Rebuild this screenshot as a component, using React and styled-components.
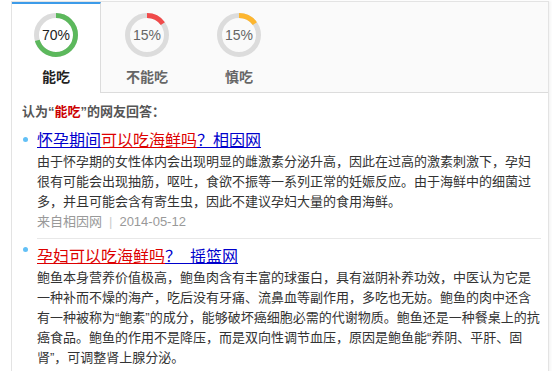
import React from 'react';
import styled, { createGlobalStyle } from 'styled-components';

const GlobalStyle = createGlobalStyle`
  html, body {
    margin: 0;
    padding: 0;
    background: #fff;
  }

  body {
    font-family: "Liberation Sans", "Noto Sans CJK SC", sans-serif;
    color: #333;
  }
`;

const tabs = [
  { label: '能吃', percent: 70, color: '#5cb85c', active: true },
  { label: '不能吃', percent: 15, color: '#f04a4a', active: false },
  { label: '慎吃', percent: 15, color: '#fdb62f', active: false },
];

const answers = [
  {
    title: [
      { text: '怀孕期间', hot: false },
      { text: '可以吃海鲜吗', hot: true },
      { text: '？相因网', hot: false },
    ],
    body: '由于怀孕期的女性体内会出现明显的雌激素分泌升高，因此在过高的激素刺激下，孕妇很有可能会出现抽筋，呕吐，食欲不振等一系列正常的妊娠反应。由于海鲜中的细菌过多，并且可能会含有寄生虫，因此不建议孕妇大量的食用海鲜。',
    source: '来自相因网',
    date: '2014-05-12',
  },
  {
    title: [
      { text: '孕妇可以吃海鲜吗', hot: true },
      { text: '？\u00a0\u00a0摇篮网', hot: false },
    ],
    body: '鲍鱼本身营养价值极高，鲍鱼肉含有丰富的球蛋白，具有滋阴补养功效，中医认为它是一种补而不燥的海产，吃后没有牙痛、流鼻血等副作用，多吃也无妨。鲍鱼的肉中还含有一种被称为“鲍素”的成分，能够破坏癌细胞必需的代谢物质。鲍鱼还是一种餐桌上的抗癌食品。鲍鱼的作用不是降压，而是双向性调节血压，原因是鲍鱼能“养阴、平肝、固肾”，可调整肾上腺分泌。',
  },
];

const StyledWrapper = styled.div`
  background: #fff;
  border-left: 1px solid #e3e3e3;
  border-right: 1px solid #e3e3e3;
  box-shadow: 2px 0 2px rgba(0, 0, 0, 0.04);
  margin: 1px 0 0 11px;
  min-height: 370px;
  width: 536px;
`;

const StyledTabBar = styled.div`
  background: #fafafa;
  border-bottom: 1px solid #dcdcdc;
  border-top: 1px solid #e3e3e3;
  display: flex;
  height: 90px;
`;

const StyledTab = styled.div`
  align-items: center;
  background: ${({ $active }) => ($active ? '#fff' : 'transparent')};
  border-right: ${({ $active }) => ($active ? '1px solid #dcdcdc' : 'none')};
  border-top: 2px solid ${({ $active }) => ($active ? '#3d9be9' : 'transparent')};
  box-sizing: border-box;
  display: flex;
  flex: 0 0 ${({ $active }) => ($active ? '89px' : '92px')};
  flex-direction: column;
  height: ${({ $active }) => ($active ? '91px' : '90px')};
  padding-top: 9px;
  position: relative;

  & + & + &::before {
    background: #dcdcdc;
    bottom: 3px;
    content: '';
    left: -1px;
    position: absolute;
    top: 3px;
    width: 1px;
  }
`;

const StyledRing = styled.div`
  height: 44px;
  position: relative;
  width: 44px;

  svg {
    display: block;
    transform: rotate(-90deg);
  }
`;

const StyledPercent = styled.span`
  align-items: center;
  color: ${({ $active }) => ($active ? '#222' : '#666')};
  display: flex;
  font-size: 14px;
  inset: 0;
  justify-content: center;
  position: absolute;
`;

const StyledTabLabel = styled.div`
  color: ${({ $active }) => ($active ? '#222' : '#666')};
  font-family: "Noto Sans CJK SC", sans-serif;
  font-size: 14px;
  font-weight: bold;
  line-height: 20px;
  margin-top: 9px;
`;

const StyledContent = styled.div`
  padding: 9px 6px 0 10px;
`;

const StyledHeading = styled.div`
  color: #555;
  font-size: 13px;
  font-weight: bold;
  line-height: 20px;

  em {
    color: #cc0000;
    font-style: normal;
  }
`;

const StyledList = styled.ul`
  list-style: none;
  margin: 7px 0 0;
  padding: 0;
`;

const StyledItem = styled.li`
  display: flex;
`;

const StyledBullet = styled.span`
  background: #62c0f6;
  border-radius: 50%;
  flex: 0 0 5px;
  height: 5px;
  margin: 8px 9px 0 1px;
`;

const StyledItemBody = styled.div`
  border-bottom: ${({ $last }) => ($last ? 'none' : '1px solid #e8e8e8')};
  padding: ${({ $first }) => ($first ? '0' : '6px')} 0 6px;
  width: 504px;
`;

const StyledTitle = styled.a`
  color: #0000cc;
  display: inline-block;
  font-size: 16px;
  line-height: 23px;
  text-decoration: underline;

  em {
    color: #dd0000;
    font-style: normal;
    text-decoration: underline;
  }
`;

const StyledText = styled.p`
  color: #333;
  font-size: 13px;
  line-height: 20px;
  margin: 0;
`;

const StyledSource = styled.div`
  color: #999;
  font-size: 13px;
  line-height: 20px;
`;

const StyledPipe = styled.span`
  color: #ccc;
  margin: 0 7px;
`;

const Ring = ({ percent, color, active }) => {
  const radius = 19.5;
  const length = 2 * Math.PI * radius;

  return (
    <StyledRing>
      <svg width="44" height="44" viewBox="0 0 44 44">
        <circle cx="22" cy="22" r={radius} fill="none" stroke="#dcdcdc" strokeWidth="5" />
        <circle
          cx="22"
          cy="22"
          r={radius}
          fill="none"
          stroke={color}
          strokeWidth="5"
          strokeDasharray={`${(length * percent) / 100} ${length}`}
        />
      </svg>
      <StyledPercent $active={active}>{percent}%</StyledPercent>
    </StyledRing>
  );
};

const App = () => (
  <>
    <GlobalStyle />
    <StyledWrapper>
      <StyledTabBar>
        {tabs.map((tab) => (
          <StyledTab key={tab.label} $active={tab.active}>
            <Ring percent={tab.percent} color={tab.color} active={tab.active} />
            <StyledTabLabel $active={tab.active}>{tab.label}</StyledTabLabel>
          </StyledTab>
        ))}
      </StyledTabBar>

      <StyledContent>
        <StyledHeading>
          认为“<em>能吃</em>”的网友回答：
        </StyledHeading>

        <StyledList>
          {answers.map((answer, index) => (
            <StyledItem key={answer.body.slice(0, 8)}>
              <StyledBullet />
              <StyledItemBody $first={index === 0} $last={index === answers.length - 1}>
                <StyledTitle href="#">
                  {answer.title.map((part) => (
                    part.hot ? <em key={part.text}>{part.text}</em> : <span key={part.text}>{part.text}</span>
                  ))}
                </StyledTitle>
                <StyledText>{answer.body}</StyledText>
                {answer.source && (
                  <StyledSource>
                    {answer.source}
                    <StyledPipe>|</StyledPipe>
                    {answer.date}
                  </StyledSource>
                )}
              </StyledItemBody>
            </StyledItem>
          ))}
        </StyledList>
      </StyledContent>
    </StyledWrapper>
  </>
);

export default App;
